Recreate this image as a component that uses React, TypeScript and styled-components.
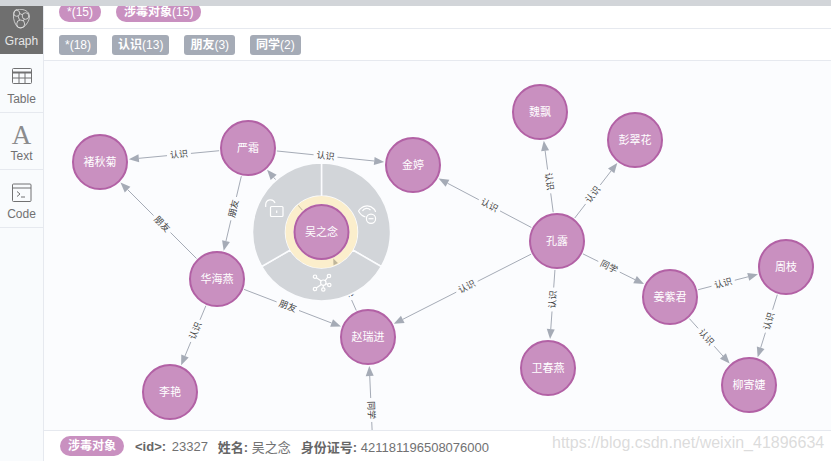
import styled, { createGlobalStyle } from 'styled-components';

const FONT = '"Liberation Sans", "Noto Sans CJK SC", sans-serif';

const GlobalStyle = createGlobalStyle`
  html, body {
    margin: 0;
    padding: 0;
    background: #fff;
    overflow: hidden;
  }
`;

const Page = styled.div`
  width: 831px;
  height: 461px;
  display: flex;
  flex-direction: column;
  position: relative;
  overflow: hidden;
  font-family: ${FONT};
`;

const TopBar = styled.div`
  height: 6px;
  flex: none;
  background: #d2d5d9;
`;

const Body = styled.div`
  flex: 1;
  display: flex;
  min-height: 0;
`;

const Sidebar = styled.nav`
  width: 43px;
  flex: none;
  background: #f9fbfd;
  border-right: 1px solid #e6e9ef;
  display: flex;
  flex-direction: column;
`;

const NavItem = styled.div<{ $active?: boolean; $height: number }>`
  height: ${(p) => p.$height}px;
  box-sizing: border-box;
  display: flex;
  flex-direction: column;
  align-items: center;
  justify-content: flex-end;
  gap: 3px;
  padding-bottom: 6px;
  color: ${(p) => (p.$active ? '#e6e6e6' : '#717172')};
  background: ${(p) => (p.$active ? '#6f6f6f' : 'transparent')};
  border-bottom: ${(p) => (p.$active ? 'none' : '1px solid #e6e9ef')};
`;

const NavLabel = styled.span`
  font-size: 12px;
  line-height: 14px;
`;

const NavIcon = styled.svg`
  display: block;
  flex: none;
  fill: none;
  stroke: currentColor;
`;

const LetterIcon = styled.span`
  font-family: "Liberation Serif", serif;
  font-size: 27px;
  line-height: 22px;
  height: 22px;
  font-weight: 400;
  color: #8c8c8d;
`;

const Main = styled.main`
  flex: 1;
  min-width: 0;
  display: flex;
  flex-direction: column;
`;

const LabelRow = styled.div`
  height: 22px;
  flex: none;
  box-sizing: content-box;
  border-bottom: 1px solid #e6e9ef;
  display: flex;
  align-items: flex-end;
  gap: 15px;
  padding: 0 0 0 15px;
  overflow: hidden;
`;

const LabelPill = styled.span`
  flex: none;
  height: 20px;
  line-height: 20px;
  margin-bottom: 6px;
  padding: 0 8px;
  border-radius: 10px;
  background: #c990c0;
  color: #fff;
  font-size: 12px;
  white-space: nowrap;
  b {
    font-weight: 700;
  }
`;

const TypeRow = styled.div`
  height: 31px;
  flex: none;
  border-bottom: 1px solid #e6e9ef;
  display: flex;
  align-items: center;
  gap: 15px;
  padding: 0 0 0 15px;
`;

const TypeTag = styled.span`
  height: 20px;
  line-height: 20px;
  padding: 0 6px;
  border-radius: 3px;
  background: #a5abb6;
  color: #fff;
  font-size: 12px;
  white-space: nowrap;
  b {
    font-weight: 700;
  }
`;

const Canvas = styled.svg`
  flex: 1;
  min-height: 0;
  display: block;
  width: 100%;
  background: #fbfcfe;
`;

const EdgeLine = styled.line`
  stroke: #a5abb6;
  stroke-width: 1;
`;

const EdgeHead = styled.polygon`
  fill: #a5abb6;
`;

const EdgeText = styled.text`
  font-family: ${FONT};
  font-size: 9px;
  fill: #444;
  text-anchor: middle;
  dominant-baseline: central;
`;

const NodeCircle = styled.circle`
  fill: #c990c0;
  stroke: #b261a5;
  stroke-width: 2;
`;

const NodeText = styled.text`
  font-family: ${FONT};
  font-size: 11px;
  fill: #fff;
  text-anchor: middle;
  dominant-baseline: central;
`;

const MenuSector = styled.path`
  fill: #d2d5d9;
  stroke: #fbfcfe;
  stroke-width: 1.5;
`;

const SelectRing = styled.circle`
  fill: none;
  stroke: #fdcc59;
  stroke-opacity: 0.3;
  stroke-width: 8;
`;

const MenuIcon = styled.g`
  fill: none;
  stroke: #fff;
  stroke-width: 1.2;
`;

const Footer = styled.footer`
  height: 30px;
  flex: none;
  border-top: 1px solid #e6e9ef;
  display: flex;
  align-items: center;
  padding: 0 0 0 16px;
  background: #fff;
  color: #717172;
  font-size: 13px;
  white-space: nowrap;
`;

const FooterPill = styled.span`
  height: 20px;
  line-height: 20px;
  padding: 0 8px;
  border-radius: 10px;
  background: #c990c0;
  color: #fff;
  font-size: 12px;
  font-weight: 700;
  margin-right: 11px;
`;

const Prop = styled.span<{ $keyGap?: number }>`
  margin-right: 10px;
  b {
    font-weight: 700;
    color: #666;
    margin-right: ${(p) => p.$keyGap ?? 0}px;
  }
`;

const Watermark = styled.span`
  position: absolute;
  left: 552px;
  top: 434px;
  font-size: 16px;
  line-height: 18px;
  color: rgba(190, 190, 190, 0.55);
  white-space: nowrap;
`;

type Node = { id: string; x: number; y: number };
type Edge = { from: string; to: string; label: string };

const R = 28;

const nodes: Node[] = [
  { id: '褚秋菊', x: 100, y: 162 },
  { id: '严霜', x: 248, y: 148 },
  { id: '金婷', x: 413, y: 165 },
  { id: '华海燕', x: 217, y: 279 },
  { id: '赵瑞进', x: 368, y: 337 },
  { id: '李艳', x: 170, y: 392 },
  { id: '魏飘', x: 540, y: 112 },
  { id: '彭翠花', x: 635, y: 140 },
  { id: '孔露', x: 557, y: 241 },
  { id: '姜紫君', x: 670, y: 297 },
  { id: '周枝', x: 786, y: 267 },
  { id: '柳寄婕', x: 749, y: 385 },
  { id: '卫春燕', x: 548, y: 368 },
];

const center: Node = { id: '吴之念', x: 321.5, y: 232 };
// the node this edge comes from sits below the visible canvas
const offscreen: Node = { id: 'off', x: 374, y: 473 };

const edges: Edge[] = [
  { from: '严霜', to: '褚秋菊', label: '认识' },
  { from: '严霜', to: '金婷', label: '认识' },
  { from: '严霜', to: '华海燕', label: '朋友' },
  { from: '华海燕', to: '褚秋菊', label: '朋友' },
  { from: '华海燕', to: '赵瑞进', label: '朋友' },
  { from: '华海燕', to: '李艳', label: '认识' },
  { from: '吴之念', to: '严霜', label: '认识' },
  { from: '赵瑞进', to: '吴之念', label: '同学' },
  { from: 'off', to: '赵瑞进', label: '同学' },
  { from: '孔露', to: '金婷', label: '认识' },
  { from: '孔露', to: '魏飘', label: '认识' },
  { from: '孔露', to: '彭翠花', label: '认识' },
  { from: '孔露', to: '赵瑞进', label: '认识' },
  { from: '孔露', to: '姜紫君', label: '同学' },
  { from: '孔露', to: '卫春燕', label: '认识' },
  { from: '姜紫君', to: '周枝', label: '认识' },
  { from: '姜紫君', to: '柳寄婕', label: '认识' },
  { from: '周枝', to: '柳寄婕', label: '认识' },
];

const findNode = (id: string) =>
  [...nodes, center, offscreen].find((n) => n.id === id) as Node;

const GraphEdge = ({ edge }: { edge: Edge }) => {
  const a = findNode(edge.from);
  const b = findNode(edge.to);
  const dx = b.x - a.x;
  const dy = b.y - a.y;
  const len = Math.hypot(dx, dy);
  const ux = dx / len;
  const uy = dy / len;
  const sx = a.x + ux * (R + 1);
  const sy = a.y + uy * (R + 1);
  const tx = b.x - ux * (R + 1);
  const ty = b.y - uy * (R + 1);
  const hx = tx - ux * 10;
  const hy = ty - uy * 10;
  const mx = (sx + hx) / 2;
  const my = (sy + hy) / 2;
  const gap = 12;
  let deg = (Math.atan2(dy, dx) * 180) / Math.PI;
  if (deg > 90 || deg < -90) deg += 180;
  return (
    <g>
      <EdgeLine x1={sx} y1={sy} x2={mx - ux * gap} y2={my - uy * gap} />
      <EdgeLine x1={mx + ux * gap} y1={my + uy * gap} x2={hx} y2={hy} />
      <EdgeHead
        points={`${tx},${ty} ${hx - uy * 4},${hy + ux * 4} ${hx + uy * 4},${hy - ux * 4}`}
      />
      <EdgeText transform={`translate(${mx} ${my}) rotate(${deg})`}>{edge.label}</EdgeText>
    </g>
  );
};

const sectorPath = (cx: number, cy: number, r0: number, r1: number, from: number, to: number) => {
  const pt = (r: number, deg: number) => {
    const t = (deg * Math.PI) / 180;
    return `${cx + r * Math.cos(t)} ${cy + r * Math.sin(t)}`;
  };
  return `M${pt(r0, from)} L${pt(r1, from)} A${r1} ${r1} 0 0 1 ${pt(r1, to)} L${pt(r0, to)} A${r0} ${r0} 0 0 0 ${pt(r0, from)}Z`;
};

const NodeMenu = () => (
  <g>
    <MenuSector d={sectorPath(center.x, center.y, 36, 69, -90, 30)} />
    <MenuSector d={sectorPath(center.x, center.y, 36, 69, 30, 150)} />
    <MenuSector d={sectorPath(center.x, center.y, 36, 69, 150, 270)} />
    <MenuIcon transform="translate(265 199)">
      <rect x="5.5" y="7.5" width="12.5" height="10" rx="1" />
      <path d="M0.7 8 V5.5 A4.8 4.8 0 0 1 10 4" />
      <path d="M11.7 11.5 V14" />
    </MenuIcon>
    <MenuIcon transform="translate(358 205)">
      <path d="M0.5 6 C4 0.5 11 -1 16 4 C17 5 17.5 6 17.5 7" />
      <path d="M0.5 6 C2 9 4 11 7.5 12" />
      <path d="M4.5 6 C6 3 10 2.5 12.5 5" />
      <circle cx="13" cy="13.7" r="4.6" />
      <path d="M10.5 13.7 H15.5" />
    </MenuIcon>
    <MenuIcon transform="translate(313 274)">
      <circle cx="10.3" cy="8.7" r="2.7" />
      <circle cx="2" cy="2.7" r="1.7" />
      <circle cx="16" cy="2" r="1.7" />
      <circle cx="2" cy="15" r="1.7" />
      <circle cx="10.3" cy="15.5" r="1.7" />
      <circle cx="16.3" cy="11" r="1.7" />
      <path d="M3.4 3.7 L8.2 7 M14.8 3.2 L12 6.8 M3.3 13.9 L8.3 10.4 M10.3 11.4 V13.8 M12.9 9.6 L14.7 10.4" />
    </MenuIcon>
  </g>
);

const GraphNode = ({ node }: { node: Node }) => (
  <g>
    <NodeCircle cx={node.x} cy={node.y} r={R - 1} />
    <NodeText x={node.x} y={node.y}>
      {node.id}
    </NodeText>
  </g>
);

export default function App() {
  return (
    <>
      <GlobalStyle />
      <Page>
        <TopBar />
        <Body>
          <Sidebar>
            <NavItem $active $height={48}>
              <NavIcon width="17" height="22" viewBox="0 0 17 22" strokeWidth="0.8">
                <path d="M3 0.8 C7 -0.5 13 0.5 15.5 4 C17.5 7.5 16 12 13.5 15 C11.5 18.5 7 19.8 4.5 18 C2 15.5 0 10 0.6 6 C1 3.5 1.5 1.5 3 0.8Z" />
                <circle cx="3.7" cy="4.3" r="3" />
                <circle cx="12.5" cy="7" r="3.3" />
                <circle cx="7.7" cy="15" r="4" />
                <path d="M6.5 4.5 L9.5 5.8 M5 7 L6.5 11 M11.5 10 L10 12" />
              </NavIcon>
              <NavLabel>Graph</NavLabel>
            </NavItem>
            <NavItem $height={59}>
              <NavIcon width="20" height="21" viewBox="0 0 20 21" strokeWidth="1">
                <rect x="0.5" y="0.5" width="19" height="15" rx="1" />
                <path d="M0.5 4.5 H19.5" strokeWidth="2" />
                <path d="M0.5 10 H19.5 M7 4.5 V15.5 M13 4.5 V15.5" />
              </NavIcon>
              <NavLabel>Table</NavLabel>
            </NavItem>
            <NavItem $height={57}>
              <LetterIcon>A</LetterIcon>
              <NavLabel>Text</NavLabel>
            </NavItem>
            <NavItem $height={58}>
              <NavIcon width="20" height="21" viewBox="0 0 20 21" strokeWidth="1">
                <rect x="0.5" y="1" width="18.5" height="17.5" rx="1" />
                <path d="M0.5 5 H19" />
                <path d="M5 8.5 L8 11 L5 13.5 M9 14 H13" />
              </NavIcon>
              <NavLabel>Code</NavLabel>
            </NavItem>
          </Sidebar>
          <Main>
            <LabelRow>
              <LabelPill>*(15)</LabelPill>
              <LabelPill>
                <b>涉毒对象</b>(15)
              </LabelPill>
            </LabelRow>
            <TypeRow>
              <TypeTag>*(18)</TypeTag>
              <TypeTag>
                <b>认识</b>(13)
              </TypeTag>
              <TypeTag>
                <b>朋友</b>(3)
              </TypeTag>
              <TypeTag>
                <b>同学</b>(2)
              </TypeTag>
            </TypeRow>
            <Canvas viewBox="44 61 787 369" preserveAspectRatio="xMinYMin slice">
              {edges.map((e) => (
                <GraphEdge key={`${e.from}-${e.to}`} edge={e} />
              ))}
              {nodes.map((n) => (
                <GraphNode key={n.id} node={n} />
              ))}
              <NodeMenu />
              <SelectRing cx={center.x} cy={center.y} r={32} />
              <GraphNode node={center} />
            </Canvas>
            <Footer>
              <FooterPill>涉毒对象</FooterPill>
              <Prop $keyGap={2}>
                <b>&lt;id&gt;:</b> 23327
              </Prop>
              <Prop>
                <b>姓名:</b> 吴之念
              </Prop>
              <Prop>
                <b>身份证号:</b> 421181196508076000
              </Prop>
            </Footer>
          </Main>
        </Body>
        <Watermark>https://blog.csdn.net/weixin_41896634</Watermark>
      </Page>
    </>
  );
}
